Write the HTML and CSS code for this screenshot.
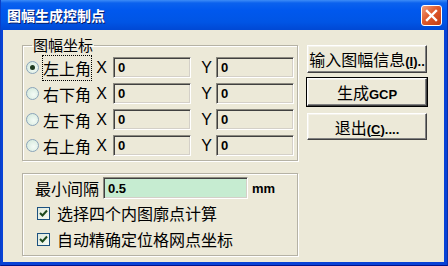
FILE: index.html
```html
<!DOCTYPE html>
<html lang="zh-CN">
<head>
  <meta charset="UTF-8" />
  <title>图幅生成控制点</title>
  <link rel="stylesheet" href="styles.css">
</head>
<body>
  <div class="window">
    <div class="titlebar">
      <span class="title">图幅生成控制点</span>
      <span class="close">
        <svg width="13" height="13" viewBox="0 0 13 13"><path d="M2 2 L11 11 M11 2 L2 11" stroke="#fff" stroke-width="2.4" stroke-linecap="square"/></svg>
      </span>
    </div>

    <div class="client">
      <div class="top">
        <fieldset class="group coords">
          <legend>图幅坐标</legend>
          <div class="row">
            <span class="radio checked"></span>
            <span class="label"><span class="focus">左上角</span></span>
            <span class="axis">X</span>
            <span class="field">0</span>
            <span class="axis y">Y</span>
            <span class="field">0</span>
          </div>
          <div class="row">
            <span class="radio"></span>
            <span class="label">右下角</span>
            <span class="axis">X</span>
            <span class="field">0</span>
            <span class="axis y">Y</span>
            <span class="field">0</span>
          </div>
          <div class="row">
            <span class="radio"></span>
            <span class="label">左下角</span>
            <span class="axis">X</span>
            <span class="field">0</span>
            <span class="axis y">Y</span>
            <span class="field">0</span>
          </div>
          <div class="row">
            <span class="radio"></span>
            <span class="label">右上角</span>
            <span class="axis">X</span>
            <span class="field">0</span>
            <span class="axis y">Y</span>
            <span class="field">0</span>
          </div>
        </fieldset>

        <div class="actions">
          <button class="btn">输入图幅信息<span class="en">(<u>I</u>)..</span></button>
          <button class="btn default">生成<span class="en">GCP</span></button>
          <button class="btn last">退出<span class="en">(<u>C</u>)....</span></button>
        </div>
      </div>

      <div class="group options">
        <div class="gap-row">
          <span class="gap-label">最小间隔</span>
          <span class="field green">0.5</span>
          <span class="unit">mm</span>
        </div>
        <div class="check-row">
          <span class="check"><svg width="9" height="9" viewBox="0 0 9 9"><path d="M1 4 L3.5 6.5 L8 1.5" fill="none" stroke="#1d4a1d" stroke-width="2"/></svg></span>
          <span>选择四个内图廓点计算</span>
        </div>
        <div class="check-row">
          <span class="check"><svg width="9" height="9" viewBox="0 0 9 9"><path d="M1 4 L3.5 6.5 L8 1.5" fill="none" stroke="#1d4a1d" stroke-width="2"/></svg></span>
          <span>自动精确定位格网点坐标</span>
        </div>
      </div>
    </div>
  </div>
</body>
</html>
```

FILE: styles.css
```css
body {
  margin: 0;
  font-family: "Noto Sans CJK SC", sans-serif;
  background: #ffffff;
}
.window {
  width: 448px;
  height: 266px;
  box-sizing: border-box;
  background: #0842d6;
  border-left: 1px solid #0a3fc7;
  border-right: 1px solid #0a2fa8;
  border-bottom: 1px solid #00138c;
}
.titlebar {
  height: 30px;
  display: flex;
  align-items: center;
  justify-content: space-between;
  padding: 0 5px 0 6px;
  background: linear-gradient(#3d8cf7 0, #0b62ee 3px, #0058ee 10px, #0055e5 22px, #0048d4 30px);
}
.title {
  color: #ffffff;
  font-size: 14px;
  font-weight: bold;
  text-shadow: 1px 1px #0a1e6a;
}
.close {
  width: 19px;
  height: 19px;
  display: flex;
  align-items: center;
  justify-content: center;
  border: 1px solid #ffffff;
  border-radius: 3px;
  background: linear-gradient(135deg, #f0a080, #e05a2c 45%, #c53c12);
}
.client {
  height: 232px;
  margin: 0 3px 0 2px;
  background: #ece9d8;
  font-size: 16px;
  color: #000000;
  box-sizing: border-box;
  padding: 8px 0 0 19px;
}
.top {
  display: flex;
  align-items: flex-start;
}
.group {
  border: 1px solid #b5b2a5;
  box-shadow: 1px 1px #ffffff, inset 1px 1px #ffffff;
  box-sizing: border-box;
  width: 276px;
}
.coords {
  margin: 0;
  padding: 5px 3px 4px 3px;
  height: 123px;
  display: flex;
  flex-direction: column;
  gap: 5px;
}
.coords legend {
  padding: 0 1px;
  margin-left: 6px;
  font-size: 15px;
  line-height: 14px;
  height: 14px;
}
.row {
  display: flex;
  align-items: center;
  height: 21px;
}
.radio {
  width: 11px;
  height: 11px;
  border-radius: 50%;
  border: 1px solid #8aa4ba;
  background: radial-gradient(circle at 60% 60%, #f4fbf6, #cfe6d8);
  box-sizing: content-box;
  position: relative;
}
.radio.checked::after {
  content: "";
  position: absolute;
  left: 3px;
  top: 3px;
  width: 5px;
  height: 5px;
  border-radius: 50%;
  background: #1f3a1f;
}
.label {
  width: 50px;
  margin-left: 4px;
  line-height: 18px;
}
.focus {
  outline: 1px dotted #000000;
}
.axis {
  width: 20px;
  box-sizing: border-box;
  padding-right: 6px;
  text-align: right;
  font-family: "Liberation Sans", sans-serif;
  font-size: 16px;
}
.axis.y {
  width: 25px;
  padding-right: 4px;
}
.field {
  width: 78px;
  height: 21px;
  box-sizing: border-box;
  border: 1px solid;
  border-color: #8c8a80 #ffffff #ffffff #8c8a80;
  box-shadow: inset 1px 1px #404040, inset -1px -1px #d4d0c8;
  background: #ece9d8;
  padding: 2px 0 0 4px;
  font-family: "Liberation Sans", sans-serif;
  font-weight: bold;
  font-size: 13px;
  line-height: 16px;
}
.actions {
  display: flex;
  flex-direction: column;
  margin: 7px 0 0 9px;
}
.btn {
  width: 120px;
  height: 28px;
  margin: 0 0 5px 0;
  padding: 0;
  font-family: "Noto Sans CJK SC", sans-serif;
  font-size: 16px;
  color: #000000;
  background: #ece9d8;
  border: 1px solid;
  border-color: #ffffff #404040 #404040 #ffffff;
  box-shadow: inset -1px -1px #808080, inset 1px 1px #f4f2ea;
}
.btn.default {
  outline: 1px solid #000000;
  outline-offset: 0;
}
.btn.last {
  height: 27px;
  margin-top: 2px;
}
.en {
  font-family: "Liberation Sans", sans-serif;
  font-weight: bold;
  font-size: 13px;
}
.options {
  margin-top: 12px;
  height: 83px;
  padding: 3px 0 0 12px;
  display: flex;
  flex-direction: column;
}
.gap-row {
  display: flex;
  align-items: center;
  height: 22px;
}
.gap-label {
  width: 68px;
}
.field.green {
  width: 145px;
  height: 22px;
  background: #c6ecd1;
  padding-top: 3px;
}
.unit {
  margin-left: 4px;
  font-family: "Liberation Sans", sans-serif;
  font-weight: bold;
  font-size: 13px;
}
.check-row {
  display: flex;
  align-items: center;
  gap: 7px;
  height: 20px;
  margin-top: 6px;
  padding-left: 2px;
}
.check-row:nth-child(2) {
  margin-top: 4px;
}
.check {
  width: 11px;
  height: 11px;
  border: 1px solid #1c5180;
  background: linear-gradient(135deg, #dfe9dc, #f6fbf4);
  display: flex;
  align-items: center;
  justify-content: center;
}
```
